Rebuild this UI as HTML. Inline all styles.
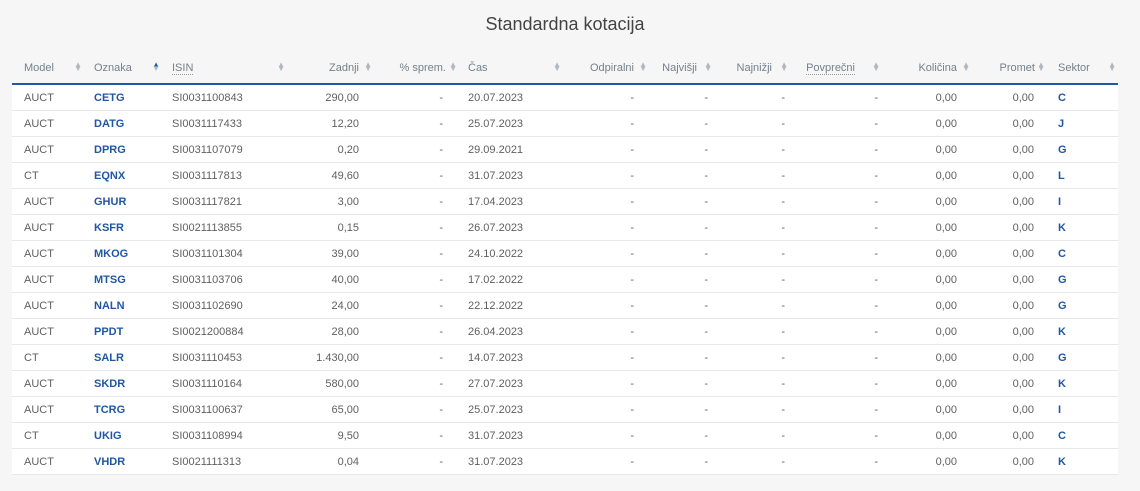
<!DOCTYPE html>
<html><head><meta charset="utf-8"><style>
body{margin:0;background:#f6f6f6;font-family:"Liberation Sans",sans-serif;width:1140px;height:491px;overflow:hidden}
h1{margin:0;position:absolute;top:14px;left:0;width:1130px;text-align:center;font-weight:normal;font-size:18px;color:#444}
table{position:absolute;left:12px;top:52px;border-collapse:collapse;table-layout:fixed;width:1106px;font-size:11px}
th{height:31px;font-weight:normal;color:#74808c;position:relative;border-bottom:2px solid #1f5aa6;padding:0;white-space:nowrap}
th i{position:absolute;top:11px;font-style:normal;font-size:8px;color:#b0b8c0;line-height:4px}
td{height:25px;border-bottom:1px solid #e8e8e8;background:#fff;color:#606060;padding:0;white-space:nowrap}
td b{color:#1f57a3;font-weight:bold}
.l{text-align:left}.r{text-align:right}
</style></head><body>
<h1>Standardna kotacija</h1>
<table>
<colgroup><col style="width:76px"><col style="width:78px"><col style="width:124px"><col style="width:87px"><col style="width:85px"><col style="width:104px"><col style="width:86px"><col style="width:65px"><col style="width:76px"><col style="width:92px"><col style="width:90px"><col style="width:75px"><col style="width:68px"></colgroup>
<tr>
<th class="l" style="padding-left:12px">Model<i style="right:6px">▲<br>▼</i></th>
<th class="l" style="padding-left:6px">Oznaka<i style="right:6px;color:#1f5aa6">▲<br><span style="color:#b0b8c0">▼</span></i></th>
<th class="l" style="padding-left:6px"><span style="border-bottom:1px dotted #999">ISIN</span><i style="right:5px">▲<br>▼</i></th>
<th class="r" style="padding-right:18px">Zadnji<i style="right:5px">▲<br>▼</i></th>
<th class="r" style="padding-right:16px">% sprem.<i style="right:5px">▲<br>▼</i></th>
<th class="l" style="padding-left:6px">Čas<i style="right:5px">▲<br>▼</i></th>
<th class="r" style="padding-right:18px">Odpiralni<i style="right:5px">▲<br>▼</i></th>
<th class="r" style="padding-right:20px">Najvišji<i style="right:5px">▲<br>▼</i></th>
<th class="r" style="padding-right:21px">Najnižji<i style="right:5px">▲<br>▼</i></th>
<th class="r" style="padding-right:30px"><span style="border-bottom:1px dotted #999">Povprečni</span><i style="right:5px">▲<br>▼</i></th>
<th class="r" style="padding-right:18px">Količina<i style="right:5px">▲<br>▼</i></th>
<th class="r" style="padding-right:15px">Promet<i style="right:5px">▲<br>▼</i></th>
<th class="l" style="padding-left:8px">Sektor<i style="right:2px">▲<br>▼</i></th>
</tr>
<tbody id="b"></tbody>
</table>
<script>
var d=[["AUCT","CETG","SI0031100843","290,00","20.07.2023","C"],["AUCT","DATG","SI0031117433","12,20","25.07.2023","J"],["AUCT","DPRG","SI0031107079","0,20","29.09.2021","G"],["CT","EQNX","SI0031117813","49,60","31.07.2023","L"],["AUCT","GHUR","SI0031117821","3,00","17.04.2023","I"],["AUCT","KSFR","SI0021113855","0,15","26.07.2023","K"],["AUCT","MKOG","SI0031101304","39,00","24.10.2022","C"],["AUCT","MTSG","SI0031103706","40,00","17.02.2022","G"],["AUCT","NALN","SI0031102690","24,00","22.12.2022","G"],["AUCT","PPDT","SI0021200884","28,00","26.04.2023","K"],["CT","SALR","SI0031110453","1.430,00","14.07.2023","G"],["AUCT","SKDR","SI0031110164","580,00","27.07.2023","K"],["AUCT","TCRG","SI0031100637","65,00","25.07.2023","I"],["CT","UKIG","SI0031108994","9,50","31.07.2023","C"],["AUCT","VHDR","SI0021111313","0,04","31.07.2023","K"]];
var h="";d.forEach(function(r){h+='<tr><td style="padding-left:12px">'+r[0]+'</td><td style="padding-left:6px"><b>'+r[1]+'</b></td><td style="padding-left:6px">'+r[2]+'</td><td class="r" style="padding-right:18px">'+r[3]+'</td><td class="r" style="padding-right:19px">-</td><td style="padding-left:6px">'+r[4]+'</td><td class="r" style="padding-right:18px">-</td><td class="r" style="padding-right:9px">-</td><td class="r" style="padding-right:8px">-</td><td class="r" style="padding-right:7px">-</td><td class="r" style="padding-right:18px">0,00</td><td class="r" style="padding-right:16px">0,00</td><td style="padding-left:8px"><b>'+r[5]+'</b></td></tr>'});
document.getElementById("b").innerHTML=h;
</script>
</body></html>
